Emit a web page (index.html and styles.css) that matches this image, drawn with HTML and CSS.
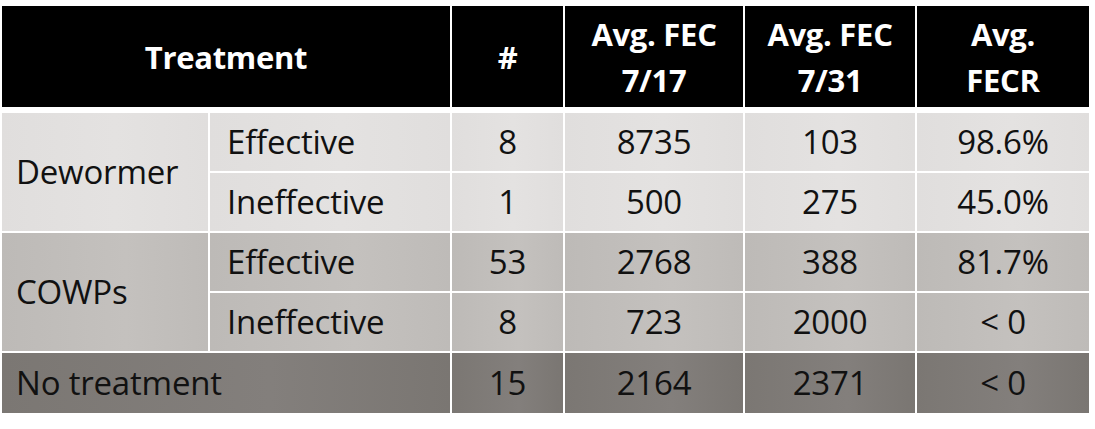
FILE: index.html
```html
<!DOCTYPE html>
<html>
<head>
<meta charset="utf-8">
<link rel="stylesheet" href="styles.css">
</head>
<body>
<table class="fec">
  <colgroup>
    <col class="c-group">
    <col class="c-sub">
    <col class="c-num">
    <col class="c-fec1">
    <col class="c-fec2">
    <col class="c-fecr">
  </colgroup>
  <thead>
    <tr class="head">
      <th colspan="2" class="cell">Treatment</th>
      <th class="cell">#</th>
      <th class="cell">Avg. FEC<br>7/17</th>
      <th class="cell">Avg. FEC<br>7/31</th>
      <th class="cell last">Avg.<br>FECR</th>
    </tr>
  </thead>
  <tbody class="sec-dew">
    <tr class="row">
      <td rowspan="2" class="cell group">Dewormer</td>
      <td class="cell sub">Effective</td>
      <td class="cell num">8</td>
      <td class="cell num">8735</td>
      <td class="cell num">103</td>
      <td class="cell num last">98.6%</td>
    </tr>
    <tr class="row">
      <td class="cell sub">Ineffective</td>
      <td class="cell num">1</td>
      <td class="cell num">500</td>
      <td class="cell num">275</td>
      <td class="cell num last">45.0%</td>
    </tr>
  </tbody>
  <tbody class="sec-cow">
    <tr class="row">
      <td rowspan="2" class="cell group">COWPs</td>
      <td class="cell sub">Effective</td>
      <td class="cell num">53</td>
      <td class="cell num">2768</td>
      <td class="cell num">388</td>
      <td class="cell num last">81.7%</td>
    </tr>
    <tr class="row">
      <td class="cell sub">Ineffective</td>
      <td class="cell num">8</td>
      <td class="cell num">723</td>
      <td class="cell num">2000</td>
      <td class="cell num last">&lt; 0</td>
    </tr>
  </tbody>
  <tbody class="sec-none">
    <tr class="row final">
      <td colspan="2" class="cell group">No treatment</td>
      <td class="cell num">15</td>
      <td class="cell num">2164</td>
      <td class="cell num">2371</td>
      <td class="cell num last">&lt; 0</td>
    </tr>
  </tbody>
</table>
</body>
</html>
```

FILE: styles.css
```css
html, body {
  margin: 0;
  padding: 0;
  background: #ffffff;
}

.fec {
  margin: 6px 0 0 2px;
  border-collapse: separate;
  border-spacing: 0;
  table-layout: fixed;
  width: 1087px;
  font-family: "Open Sans", "Liberation Sans", sans-serif;
  color: #111111;
}

.c-group { width: 208px; }
.c-sub { width: 242px; }
.c-num { width: 113px; }
.c-fec1 { width: 180px; }
.c-fec2 { width: 172px; }
.c-fecr { width: 172px; }

.cell {
  padding: 0;
  border-right: 2px solid #ffffff;
  border-bottom: 2px solid #ffffff;
  box-sizing: border-box;
}

.cell.last {
  border-right: none;
}

.head {
  height: 107px;
}

.head .cell {
  background: #000000;
  color: #ffffff;
  font-weight: 700;
  font-size: 31px;
  line-height: 46px;
  letter-spacing: -0.3px;
  text-align: center;
  vertical-align: middle;
  border-bottom-width: 6px;
  padding-top: 1px;
}

.row {
  height: 60px;
}

.row .cell {
  font-size: 33px;
  line-height: 40px;
  letter-spacing: -0.2px;
  vertical-align: middle;
}

.final .cell {
  border-bottom: none;
  height: 59px;
}

.num {
  text-align: center;
}

.sub {
  padding-left: 17px;
}

.group {
  padding-left: 14px;
}

.sec-dew .cell {
  background: linear-gradient(90deg, #e0dedd 0%, #e4e2e1 55%, #e0dedd 100%);
}

.sec-cow .cell {
  background: linear-gradient(90deg, #bdbab7 0%, #c4c1be 60%, #bebbb8 100%);
}

.sec-none .cell {
  background: linear-gradient(90deg, #7b7773 0%, #837f7c 60%, #7a7672 100%);
}
```
